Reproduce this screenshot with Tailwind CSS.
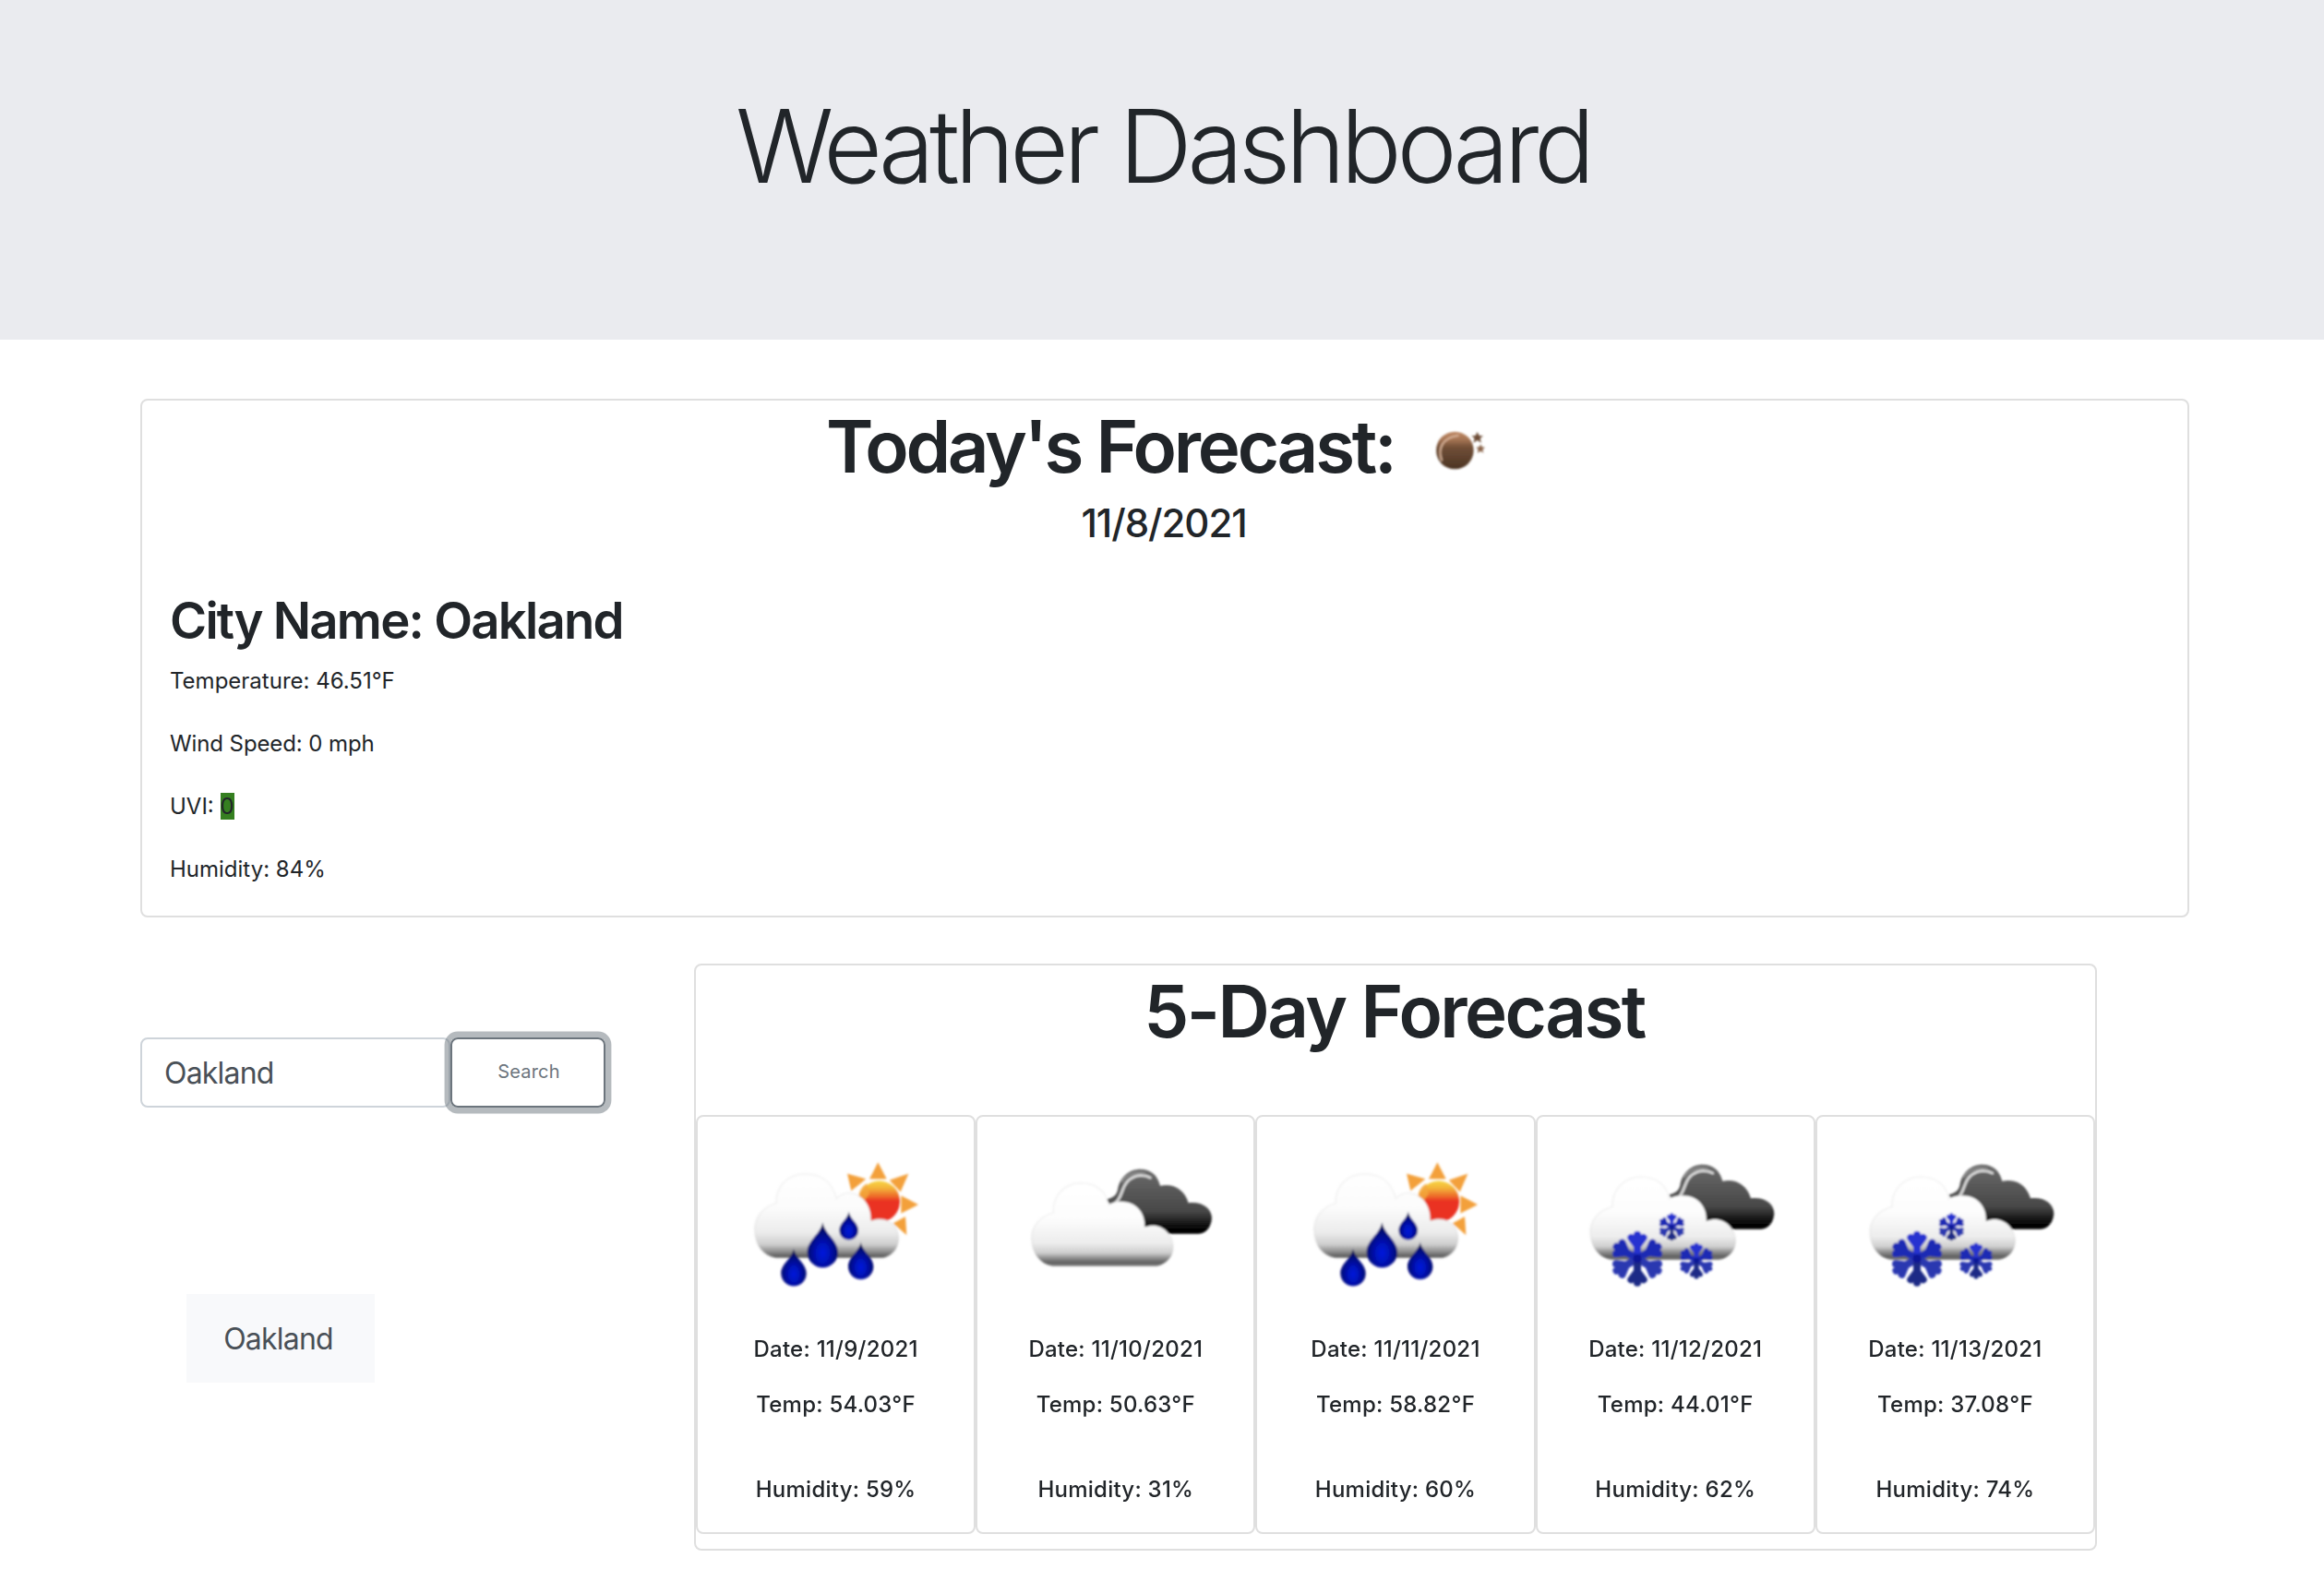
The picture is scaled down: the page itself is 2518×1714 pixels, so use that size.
<!DOCTYPE html>
<html lang="en">
<head>
<meta charset="utf-8">
<title>Weather Dashboard</title>
<script src="https://cdn.jsdelivr.net/npm/@tailwindcss/browser@4"></script>
</head>
<body class="bg-white font-[Inter,sans-serif] text-[#212529] min-h-[1714px]">

<svg class="absolute h-0 w-0" aria-hidden="true">
  <defs>
    <filter id="soft" x="-5%" y="-5%" width="110%" height="110%"><feGaussianBlur stdDeviation="3.5"/></filter>
    <linearGradient id="rainCloud" gradientUnits="userSpaceOnUse" x1="0" y1="95" x2="0" y2="368">
      <stop offset="0" stop-color="#fff"/><stop offset=".4" stop-color="#fcfcfc"/><stop offset=".7" stop-color="#ececec"/><stop offset=".84" stop-color="#cfcfcf"/><stop offset=".93" stop-color="#8c8c8c"/><stop offset="1" stop-color="#505050"/>
    </linearGradient>
    <linearGradient id="paleCloud" gradientUnits="userSpaceOnUse" x1="0" y1="125" x2="0" y2="395">
      <stop offset="0" stop-color="#fff"/><stop offset=".42" stop-color="#fdfdfd"/><stop offset=".72" stop-color="#ededed"/><stop offset=".84" stop-color="#cfcfcf"/><stop offset=".91" stop-color="#8a8a8a"/><stop offset=".96" stop-color="#606060"/><stop offset="1" stop-color="#808080"/>
    </linearGradient>
    <linearGradient id="darkCloud" gradientUnits="userSpaceOnUse" x1="0" y1="80" x2="0" y2="290">
      <stop offset="0" stop-color="#6c6c6c"/><stop offset=".3" stop-color="#5a5a5a"/><stop offset=".65" stop-color="#484848"/><stop offset=".82" stop-color="#1c1c1c"/><stop offset=".95" stop-color="#000"/>
    </linearGradient>
    <linearGradient id="sun" gradientUnits="userSpaceOnUse" x1="0" y1="118" x2="0" y2="250">
      <stop offset="0" stop-color="#f8d540"/><stop offset=".18" stop-color="#f4b43a"/><stop offset=".38" stop-color="#ee6a2a"/><stop offset=".5" stop-color="#ea3323"/><stop offset="1" stop-color="#ea3323"/>
    </linearGradient>
    <radialGradient id="drop" cx=".5" cy=".68" r=".6">
      <stop offset="0" stop-color="#0019dc"/><stop offset=".3" stop-color="#0014c0"/><stop offset=".75" stop-color="#00087c"/><stop offset="1" stop-color="#000548"/>
    </radialGradient>
    <linearGradient id="moon" x1="0" y1="0" x2="0" y2="1">
      <stop offset="0" stop-color="#c08a66"/><stop offset=".22" stop-color="#a47352"/><stop offset=".42" stop-color="#714f37"/><stop offset="1" stop-color="#4b3423"/>
    </linearGradient>
    <path id="dropShape" fill="url(#drop)" d="M0-93C5-55 50-35 50 5A50 50 0 0 1-50 5C-50-35-5-55 0-93Z"/>
    <path id="arm" fill="none" stroke-linecap="round" d="M0-6V-78M-20-68L0-42L20-68" stroke-width="24"/>
    <g id="flake">
      <g stroke="#2632d0"><use href="#arm"/></g>
      <g stroke="#1f2bb4"><use href="#arm" transform="rotate(60)"/><use href="#arm" transform="rotate(-60)"/></g>
      <g stroke="#2c38b0"><use href="#arm" transform="rotate(120)"/><use href="#arm" transform="rotate(-120)"/></g>
      <g stroke="#1e2a86"><use href="#arm" transform="rotate(180)"/></g>
      <circle r="14" fill="#0d1496"/>
    </g>
    <g id="backCloud">
      <path fill="url(#darkCloud)" d="M326 178C345 174 358 166 362 148C368 105 400 80 435 80C470 80 492 100 500 134C545 125 580 148 592 190C640 185 668 210 668 240C665 270 650 288 625 290H530L430 270L340 200Z"/>
      <path fill="none" stroke="#d8d8d8" stroke-width="9" stroke-linecap="round" d="M352 192C382 172 370 122 418 104C436 98 452 99 468 108"/>
      <path fill="none" stroke="#8a8a8a" stroke-width="7" stroke-linecap="round" d="M376 120C390 98 420 88 450 94"/>
    </g>
    <path id="frontCloud" stroke="#999" stroke-opacity=".12" stroke-width="5" d="M150 395H490C525 388 544 360 542 328C538 285 500 250 450 268C452 225 425 188 380 186C360 184 345 188 332 196C325 150 290 125 240 125C185 127 150 170 152 222C105 235 80 270 82 308C85 355 110 388 150 395Z"/>
    <symbol id="rain" viewBox="-13 0 720 510">
      <g filter="url(#soft)">
        <g fill="#f3a03b">
          <path d="M483 58L455 112H511Z"/><path d="M582 95L520 116L556 154Z"/><path d="M614 195L558 166V224Z"/><path d="M383 95L396 150L444 112Z"/><path d="M576 294L532 256L572 234Z"/>
        </g>
        <circle cx="487" cy="185" r="67" fill="url(#sun)"/>
        <path fill="#f3a93c" d="M420 165C422 150 432 135 446 126L455 160L440 182Z" opacity=".8"/>
        <path fill="url(#rainCloud)" stroke="#999" stroke-opacity=".12" stroke-width="5" d="M150 368H500C535 360 552 330 550 298C545 255 505 230 460 247C462 205 440 165 395 158C375 155 358 165 348 175C335 125 300 95 245 95C185 97 150 140 152 190C105 205 80 240 82 280C85 330 110 360 150 368Z"/>
        <use href="#dropShape" transform="translate(209 415) scale(.82)"/>
        <use href="#dropShape" transform="translate(303 345)"/>
        <use href="#dropShape" transform="translate(388 276) scale(.62)"/>
        <use href="#dropShape" transform="translate(427 393) scale(.82)"/>
      </g>
    </symbol>
    <symbol id="clouds" viewBox="-4 0 720 510">
      <g filter="url(#soft)">
        <use href="#backCloud"/>
        <use href="#frontCloud" fill="url(#paleCloud)"/>
      </g>
    </symbol>
    <symbol id="snow" viewBox="-14 0 720 510">
      <g filter="url(#soft)">
        <use href="#backCloud" transform="translate(0 -15)"/>
        <use href="#frontCloud" fill="url(#paleCloud)" transform="translate(-14 -20) scale(1.026 1)"/>
        <use href="#flake" transform="translate(223 371)"/>
        <use href="#flake" transform="translate(335 268) scale(.5)"/>
        <use href="#flake" transform="translate(415 378) scale(.65)"/>
      </g>
    </symbol>
  </defs>
</svg>

<header class="h-[368px] bg-[#eaebef] pt-[93px] text-center">
  <h1 class="ml-[2px] text-[110px] leading-[130px] font-light tracking-[-5.27px]">Weather Dashboard</h1>
</header>

<main class="ml-[152px] w-[2220px] pt-16">
  <section class="h-[562px] rounded-lg border-2 border-[#dfdfdf] pt-[2px]">
    <div class="flex items-start justify-center">
      <h2 class="w-[634px] text-[78px] leading-[96px] font-semibold tracking-[-3.25px] whitespace-nowrap">Today's Forecast:</h2>
      <svg class="mt-1 h-[90px] w-[100px]" viewBox="0 0 300 270">
        <g filter="url(#soft)">
          <circle cx="142" cy="144" r="61" fill="url(#moon)"/>
          <path d="M99 176C86 140 100 102 152 96" fill="none" stroke="#d8b298" stroke-width="6" stroke-linecap="round"/>
          <path fill="#6d4c36" d="M215 84L221 96L234 97L224 105L228 119L215 111L202 119L206 105L196 97L209 96Z"/>
          <path fill="#8a6449" d="M226 124L230 133L240 134L232 141L235 152L226 146L215 152L218 141L211 134L221 133Z"/>
        </g>
      </svg>
    </div>
    <h3 class="mt-[9px] pr-[2px] text-center text-[42px] leading-[52px] font-medium tracking-[-1.05px]">11/8/2021</h3>
    <div class="mt-[47px] pl-[30px]">
      <h2 class="text-[54.5px] leading-[64px] font-semibold tracking-[-1.78px]">City Name: Oakland</h2>
      <div class="mt-4 flex flex-col gap-8 text-2xl">
        <p class="leading-9">Temperature: 46.51°F</p>
        <p class="leading-9 tracking-[-0.1px]">Wind Speed: 0 mph</p>
        <p class="leading-9">UVI: <span class="bg-[#357f20]">0</span></p>
        <p class="leading-9">Humidity: 84%</p>
      </div>
    </div>
  </section>

  <div class="mt-[50px] flex">
    <aside class="w-[600px] pt-20">
      <form class="flex">
        <input class="h-[76px] w-[336px] rounded-lg border-2 border-[#ced4da] px-6 text-[32px] tracking-[-0.8px] text-[#495057]" value="Oakland" aria-label="City">
        <button type="button" class="h-[76px] w-[168px] rounded-lg border-2 border-[#6c757d] pb-[3px] pl-[2px] text-xl tracking-[0.15px] text-[#6c757d] ring-[6.4px] ring-[#6c757d]/50">Search</button>
      </form>
      <button type="button" class="mt-[202px] ml-[50px] h-24 w-[204px] bg-[#f8f9fb] pt-[2px] pr-[5px] text-[32px] tracking-[-0.8px] text-[#495057]">Oakland</button>
    </aside>

    <section class="h-[636px] w-[1520px] rounded-lg border-2 border-[#dfdfdf] pt-[2px]">
      <h2 class="pr-[3px] text-center text-[78px] leading-[96px] font-semibold tracking-[-2.55px]">5-Day Forecast</h2>
      <div class="mt-16 grid grid-cols-5 text-center text-2xl font-medium tracking-[0.25px]">
        <article class="flex h-[454px] flex-col items-center rounded-lg border-2 border-[#dfdfdf] pt-[30px] leading-7">
          <svg class="h-[170px] w-[240px]"><use href="#rain"/></svg>
          <p class="mt-[38px]">Date: 11/9/2021</p>
          <p class="mt-8">Temp: 54.03°F</p>
          <p class="mt-16">Humidity: 59%</p>
        </article>
        <article class="flex h-[454px] flex-col items-center rounded-lg border-2 border-[#dfdfdf] pt-[30px] leading-7">
          <svg class="h-[170px] w-[240px]"><use href="#clouds"/></svg>
          <p class="mt-[38px]">Date: 11/10/2021</p>
          <p class="mt-8">Temp: 50.63°F</p>
          <p class="mt-16">Humidity: 31%</p>
        </article>
        <article class="flex h-[454px] flex-col items-center rounded-lg border-2 border-[#dfdfdf] pt-[30px] leading-7">
          <svg class="h-[170px] w-[240px]"><use href="#rain"/></svg>
          <p class="mt-[38px]">Date: 11/11/2021</p>
          <p class="mt-8">Temp: 58.82°F</p>
          <p class="mt-16">Humidity: 60%</p>
        </article>
        <article class="flex h-[454px] flex-col items-center rounded-lg border-2 border-[#dfdfdf] pt-[30px] leading-7">
          <svg class="h-[170px] w-[240px]"><use href="#snow"/></svg>
          <p class="mt-[38px]">Date: 11/12/2021</p>
          <p class="mt-8">Temp: 44.01°F</p>
          <p class="mt-16">Humidity: 62%</p>
        </article>
        <article class="flex h-[454px] flex-col items-center rounded-lg border-2 border-[#dfdfdf] pt-[30px] leading-7">
          <svg class="h-[170px] w-[240px]"><use href="#snow"/></svg>
          <p class="mt-[38px]">Date: 11/13/2021</p>
          <p class="mt-8">Temp: 37.08°F</p>
          <p class="mt-16">Humidity: 74%</p>
        </article>
      </div>
    </section>
  </div>
</main>
</body>
</html>
